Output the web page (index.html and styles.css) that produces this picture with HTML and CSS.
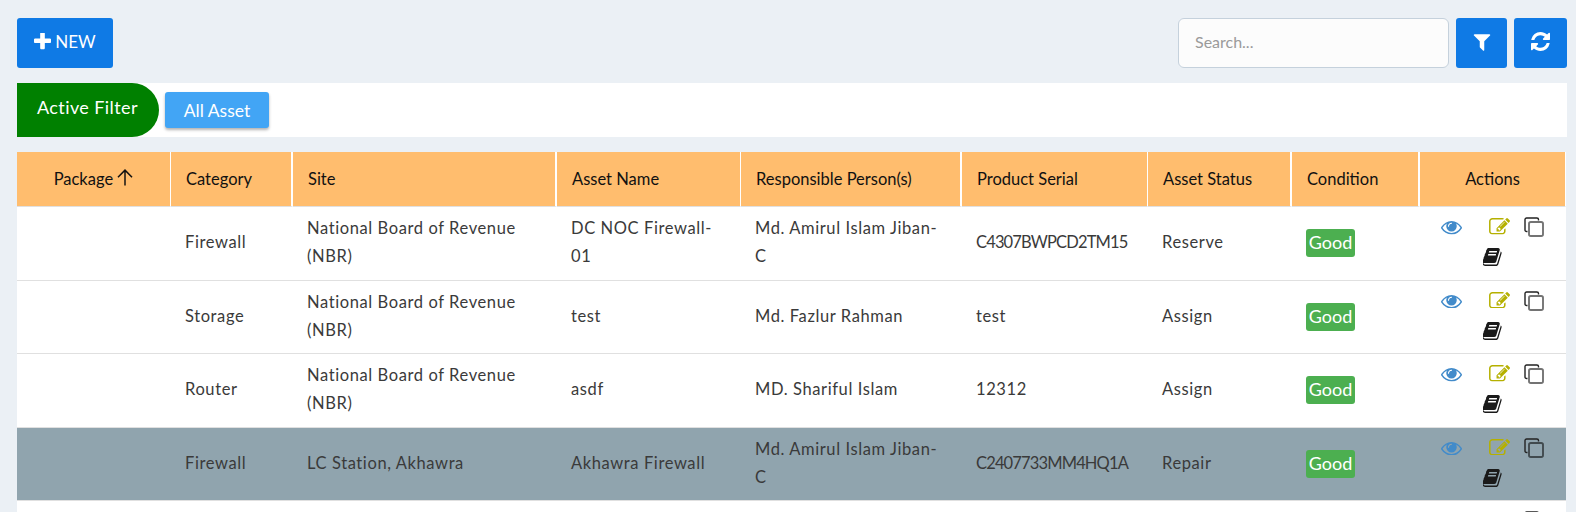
FILE: index.html
```html
<!DOCTYPE html>
<html lang="en">
<head>
<meta charset="utf-8">
<title>Assets</title>
<link rel="stylesheet" href="styles.css">
</head>
<body>
<svg class="defs" width="0" height="0" aria-hidden="true">
  <symbol id="i-eye" viewBox="0 384 1792 1152"><path d="M1664 960q-152-236-381-353 61 104 61 225 0 185-131.5 316.5t-316.5 131.5-316.5-131.5-131.5-316.5q0-121 61-225-229 117-381 353 133 205 333.5 326.5t434.5 121.5 434.5-121.5 333.5-326.5zm-720-384q0-20-14-34t-34-14q-125 0-214.5 89.5t-89.5 214.5q0 20 14 34t34 14 34-14 14-34q0-86 61-147t147-61q20 0 34-14t14-34zm848 384q0 34-20 69-140 230-376.5 368.5t-499.5 138.5-499.5-139-376.5-368q-20-35-20-69t20-69q140-229 376.5-368t499.5-139 499.5 139 376.5 368q20 35 20 69z"/></symbol>
  <symbol id="i-edit" viewBox="0 128 1784 1408"><path d="M888 1184l116-116-152-152-116 116v56h96v96h56zm440-720q-16-16-33 1l-350 350q-17 17-1 33t33-1l350-350q17-17 1-33zm80 594v190q0 119-84.5 203.5t-203.5 84.5h-832q-119 0-203.5-84.5t-84.5-203.5v-832q0-119 84.5-203.5t203.5-84.5h832q63 0 117 25 15 7 18 23 3 17-9 29l-49 49q-14 14-32 8-23-6-45-6h-832q-66 0-113 47t-47 113v832q0 66 47 113t113 47h832q66 0 113-47t47-113v-126q0-13 9-22l64-64q15-15 35-7t20 29zm-96-738l288 288-672 672h-288v-288zm444 132l-92 92-288-288 92-92q28-28 68-28t68 28l152 152q28 28 28 68t-28 68z"/></symbol>
  <symbol id="i-book" viewBox="90 128 1590 1536"><path d="M1639 478q40 57 18 129l-275 906q-19 64-76.5 107.5t-122.5 43.5h-923q-77 0-148.5-53.5t-99.5-131.5q-24-67-2-127 0-4 3-27t4-37q1-8-3-21.5t-3-19.5q2-11 8-21t16.5-23.5 16.5-23.5q23-38 45-91.5t30-91.5q3-10 .5-30t-.5-28q3-11 17-28t17-23q21-36 42-92t25-90q1-9-2.5-32t.5-28q4-13 22-30.5t22-22.5q19-26 42.5-84.5t27.5-96.5q1-8-3-25.5t-2-26.5q2-8 9-18t18-23 17-21q8-12 16.5-30.5t15-35 16-36 19.5-32 26.5-23.5 36-11.5 47.5 5.5l-1 3q38-9 51-9h761q74 0 114 56t18 130l-274 906q-36 119-71.5 153.5t-128.5 34.5h-869q-27 0-38 15-11 16-1 43 24 70 144 70h923q29 0 56-15.5t35-41.5l300-987q7-22 5-57 38 15 59 43zm-1064 2q-4 13 2 22.5t20 9.5h608q13 0 25.5-9.5t16.5-22.5l21-64q4-13-2-22.5t-20-9.5h-608q-13 0-25.5 9.5t-16.5 22.5zm-83 256q-4 13 2 22.5t20 9.5h608q13 0 25.5-9.5t16.5-22.5l21-64q4-13-2-22.5t-20-9.5h-608q-13 0-25.5 9.5t-16.5 22.5z"/></symbol>
  <symbol id="i-copy" viewBox="0 0 20 20"><path class="copy-back" d="M3.5 14.5H2.6A1.6 1.6 0 0 1 1 12.9V2.6A1.6 1.6 0 0 1 2.6 1h10.3a1.6 1.6 0 0 1 1.6 1.6v1"/><rect class="copy-front" x="5" y="5" width="14" height="14" rx="1.8"/></symbol>
</svg>

<header class="toolbar">
  <button class="btn btn-new"><svg class="ic-plus" viewBox="192 192 1408 1408"><path d="M1600 736v192q0 40-28 68t-68 28h-416v416q0 40-28 68t-68 28h-192q-40 0-68-28t-28-68v-416h-416q-40 0-68-28t-28-68v-192q0-40 28-68t68-28h416v-416q0-40 28-68t68-28h192q40 0 68 28t28 68v416h416q40 0 68 28t28 68z"/></svg>NEW</button>
  <div class="tools">
    <input class="search" type="text" placeholder="Search...">
    <button class="btn btn-filter" aria-label="Filter"><svg class="ic-filter" viewBox="128 256 1536 1408"><path d="M1595 295q17 41-14 70l-493 493v742q0 42-39 59-13 5-25 5-27 0-45-19l-256-256q-19-19-19-45v-486l-493-493q-31-29-14-70 17-39 59-39h1280q42 0 59 39z"/></svg></button>
    <button class="btn btn-refresh" aria-label="Refresh"><svg class="ic-tool" viewBox="128 128 1536 1536"><path d="M1639 1056q0 5-1 7-64 268-268 434.5t-478 166.5q-146 0-282.5-55t-243.5-157l-129 129q-19 19-45 19t-45-19-19-45v-448q0-26 19-45t45-19h448q26 0 45 19t19 45-19 45l-137 137q71 66 161 102t187 36q134 0 250-65t186-179q11-17 53-117 8-23 30-23h192q13 0 22.5 9.5t9.5 22.5zm25-800v448q0 26-19 45t-45 19h-448q-26 0-45-19t-19-45 19-45l138-138q-148-137-349-137-134 0-250 65t-186 179q-11 17-53 117-8 23-30 23h-199q-13 0-22.5-9.5t-9.5-22.5v-7q65-268 270-434.5t480-166.5q146 0 284 55.5t245 156.5l130-129q19-19 45-19t45 19 19 45z"/></svg></button>
  </div>
</header>

<section class="filters">
  <div class="active-filter">Active Filter</div>
  <button class="chip">All Asset</button>
</section>

<table class="grid">
  <colgroup>
    <col class="c1"><col class="c2"><col class="c3"><col class="c4"><col class="c5"><col class="c6"><col class="c7"><col class="c8"><col class="c9">
  </colgroup>
  <thead>
    <tr>
      <th class="center">Package <svg class="sort" viewBox="1 1 14 15"><path d="M8 15.5V2M1.8 8.2L8 2l6.2 6.2"/></svg></th>
      <th>Category</th><th>Site</th><th>Asset Name</th><th>Responsible Person(s)</th><th>Product Serial</th><th>Asset Status</th><th>Condition</th><th class="center actions-head">Actions</th>
    </tr>
  </thead>
  <tbody>
    <tr>
      <td></td><td>Firewall</td><td>National Board of Revenue (NBR)</td><td>DC NOC Firewall-01</td><td>Md. Amirul Islam Jiban-C</td><td class="serial">C4307BWPCD2TM15</td><td>Reserve</td><td><span class="badge">Good</span></td>
      <td class="actions"><svg class="a-eye"><use href="#i-eye"/></svg><svg class="a-edit"><use href="#i-edit"/></svg><svg class="a-copy"><use href="#i-copy"/></svg><svg class="a-book"><use href="#i-book"/></svg></td>
    </tr>
    <tr>
      <td></td><td>Storage</td><td>National Board of Revenue (NBR)</td><td>test</td><td>Md. Fazlur Rahman</td><td>test</td><td>Assign</td><td><span class="badge">Good</span></td>
      <td class="actions"><svg class="a-eye"><use href="#i-eye"/></svg><svg class="a-edit"><use href="#i-edit"/></svg><svg class="a-copy"><use href="#i-copy"/></svg><svg class="a-book"><use href="#i-book"/></svg></td>
    </tr>
    <tr>
      <td></td><td>Router</td><td>National Board of Revenue (NBR)</td><td>asdf</td><td>MD. Shariful Islam</td><td>12312</td><td>Assign</td><td><span class="badge">Good</span></td>
      <td class="actions"><svg class="a-eye"><use href="#i-eye"/></svg><svg class="a-edit"><use href="#i-edit"/></svg><svg class="a-copy"><use href="#i-copy"/></svg><svg class="a-book"><use href="#i-book"/></svg></td>
    </tr>
    <tr class="selected">
      <td></td><td>Firewall</td><td>LC Station, Akhawra</td><td>Akhawra Firewall</td><td>Md. Amirul Islam Jiban-C</td><td class="serial">C2407733MM4HQ1A</td><td>Repair</td><td><span class="badge">Good</span></td>
      <td class="actions"><svg class="a-eye"><use href="#i-eye"/></svg><svg class="a-edit"><use href="#i-edit"/></svg><svg class="a-copy"><use href="#i-copy"/></svg><svg class="a-book"><use href="#i-book"/></svg></td>
    </tr>
    <tr>
      <td></td><td></td><td></td><td></td><td></td><td></td><td></td><td></td>
      <td class="actions"><svg class="a-eye"><use href="#i-eye"/></svg><svg class="a-edit"><use href="#i-edit"/></svg><svg class="a-copy"><use href="#i-copy"/></svg><svg class="a-book"><use href="#i-book"/></svg></td>
    </tr>
  </tbody>
</table>
</body>
</html>
```
FILE: styles.css
```css
* { box-sizing: border-box; }
html, body { height: 512px; overflow: hidden; }
body {
  margin: 0;
  padding: 18px 9px 0 17px;
  background: #ebf0f5;
  font-family: "Lato", "Open Sans", sans-serif;
  font-size: 16.5px;
  color: #3a3a3a;
}
.defs { position: absolute; }
.toolbar { display: flex; justify-content: space-between; height: 50px; margin-bottom: 15px; }
.tools { display: flex; gap: 7px; }
.btn {
  border: 0; border-radius: 3px; background: #0f7ae5; color: #fff;
  display: flex; align-items: center; justify-content: center;
  font: inherit; height: 50px; padding: 0;
}
.btn-new { width: 96px; font-size: 17px; gap: 4px; padding-bottom: 3px; }
.btn-filter { width: 51px; padding-bottom: 2px; }
.btn-refresh { width: 53px; padding-bottom: 3px; }
.ic-plus { width: 17px; height: 17px; fill: #fff; }
.ic-filter { width: 18px; height: 17px; fill: #fff; }
.ic-tool { width: 19px; height: 19px; fill: #fff; }
.search {
  width: 271px; height: 50px; border: 1px solid #c5d1dc; border-radius: 6px;
  background: #fcfcfc; padding: 0 16px 3px; font: inherit; font-size: 16px; color: #333;
}
.search::placeholder { color: #9a9a9a; }
.filters {
  display: flex; align-items: center; gap: 6px; height: 54px; background: #fff; margin-bottom: 15px;
}
.active-filter {
  width: 142px; height: 54px; background: #008000; color: #fff;
  border-radius: 0 27px 27px 0; font-size: 18px; letter-spacing: .4px;
  padding: 12px 0 0 20px; line-height: 24px;
}
.chip {
  width: 104px; height: 36px; border: 0; border-radius: 3px; background: #42a5f5; color: #fff;
  font: inherit; font-size: 17.5px; box-shadow: 0 2px 3px rgba(0,0,0,.3);
}
.grid {
  width: 1549px; border-collapse: separate; border-spacing: 0; table-layout: fixed; background: #fff;
}
.c1 { width: 154px; } .c2 { width: 122px; } .c3 { width: 264px; } .c4 { width: 184px; }
.c5 { width: 221px; } .c6 { width: 186px; } .c7 { width: 144px; } .c8 { width: 128px; } .c9 { width: 146px; }
th {
  height: 55px; background: #ffbd6e; color: #111; font-weight: 400; text-align: left;
  padding: 0 15px; border-right: 2px solid #fff; border-bottom: 1px solid #e0e0e0; font-size: 16.5px;
}
th:nth-child(1), th:nth-child(4), th:nth-child(6), th:nth-child(9) { border-right-width: 1px; }
.center { text-align: center; }
.sort { width: 16px; height: 17px; fill: none; stroke: #111; stroke-width: 1.3; vertical-align: -1px; }
td {
  height: 73.5px; padding: 0 15px 2px 14px; line-height: 28px; border-bottom: 1px solid #e0e0e0;
  vertical-align: middle; letter-spacing: .6px;
}
.serial { letter-spacing: -.85px; }
.selected td { background: #90a4ae; }
.badge {
  display: inline-block; background: #4caf50; color: #fff; border-radius: 3px; letter-spacing: 0;
  height: 28px; line-height: 27px; width: 49px; text-align: center; vertical-align: middle; font-size: 18px;
}
td.actions { padding: 10px 2px 0 0; vertical-align: top; text-align: center; line-height: 0; }
.actions svg { display: inline-block; vertical-align: top; }
.a-eye { width: 21px; height: 13.5px; fill: #428bca; margin-top: 4px; margin-right: 27px; }
.a-edit { width: 21px; height: 16.5px; fill: #b5b000; margin-top: 1px; margin-right: 14px; }
.a-copy { width: 20px; height: 20px; }
.a-book { width: 19px; height: 18px; fill: #1a1a1a; margin: 11px 50px 0; }
.copy-back { fill: none; stroke: #222; stroke-width: 1.4; }
.copy-front { fill: none; stroke: rgba(0,0,0,.55); stroke-width: 1.9; }
```
